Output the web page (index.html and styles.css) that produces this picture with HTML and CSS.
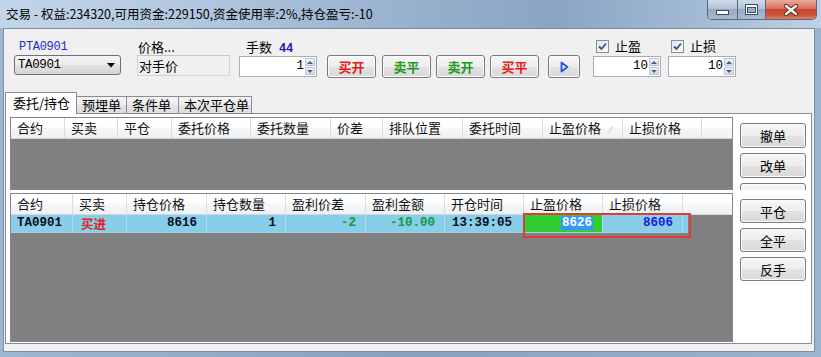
FILE: index.html
```html
<!DOCTYPE html>
<html lang="zh-CN">
<head>
<meta charset="utf-8">
<title>交易</title>
<link rel="stylesheet" href="styles.css">
</head>
<body>
<div class="win">
  <div class="titlebar">
    <span class="title">交易 - 权益:234320,可用资金:229150,资金使用率:2%,持仓盈亏:-10</span>
    <div class="caps">
      <div class="cap cap-min"><svg width="13" height="6" viewBox="0 0 13 6"><rect x="0.5" y="0.5" width="12" height="4" fill="#fff" stroke="#3a4a66"/></svg></div>
      <div class="cap cap-max"><svg width="13" height="11" viewBox="0 0 13 11"><rect x="0.5" y="0.5" width="12" height="10" fill="#fff" stroke="#3a4a66"/><rect x="2.5" y="3.5" width="8" height="5" fill="#9fb1c9" stroke="#3a4a66"/></svg></div>
      <div class="cap cap-close"><svg width="16" height="12" viewBox="0 0 16 12"><path d="M3 2 L13 10 M13 2 L3 10" stroke="#5b2218" stroke-width="4.4" stroke-linecap="round"/><path d="M3 2 L13 10 M13 2 L3 10" stroke="#fff" stroke-width="2.4" stroke-linecap="round"/></svg></div>
    </div>
  </div>

  <div class="client">
    <div class="controls">
      <div class="col col-code">
        <div class="lbl code-lbl">PTA0901</div>
        <div class="combo"><span class="combo-val">TA0901</span><svg class="combo-arrow" width="8" height="5" viewBox="0 0 8 5"><path d="M0 0 H8 L4 4.5 Z" fill="#000"/></svg></div>
      </div>
      <div class="col col-price">
        <div class="lbl price-lbl">价格...</div>
        <div class="pricebox">对手价</div>
      </div>
      <div class="col col-qty">
        <div class="lbl qty-lbl">手数 <b class="qty-max">44</b></div>
        <div class="spin spin-qty"><span class="spin-val">1</span><div class="spin-btns"><span class="sb sb-up"></span><span class="sb sb-dn"></span></div></div>
      </div>
      <button class="btn act red b1">买开</button>
      <button class="btn act green b2">卖平</button>
      <button class="btn act green b3">卖开</button>
      <button class="btn act red b4">买平</button>
      <button class="btn play"><svg width="9" height="12" viewBox="0 0 9 12"><path d="M1.5 1.5 L7.5 6 L1.5 10.5 Z" fill="none" stroke="#2458d0" stroke-width="1.8" stroke-linejoin="round"/></svg></button>
      <div class="col col-chk c1">
        <div class="chk"><span class="box"><svg width="11" height="11" viewBox="0 0 11 11"><path d="M2 5.5 L4.5 8 L9 2.5" fill="none" stroke="#3b4f91" stroke-width="1.8"/></svg></span>止盈</div>
        <div class="spin spin-sm"><span class="spin-val">10</span><div class="spin-btns"><span class="sb sb-up"></span><span class="sb sb-dn"></span></div></div>
      </div>
      <div class="col col-chk c2">
        <div class="chk"><span class="box"><svg width="11" height="11" viewBox="0 0 11 11"><path d="M2 5.5 L4.5 8 L9 2.5" fill="none" stroke="#3b4f91" stroke-width="1.8"/></svg></span>止损</div>
        <div class="spin spin-sm"><span class="spin-val">10</span><div class="spin-btns"><span class="sb sb-up"></span><span class="sb sb-dn"></span></div></div>
      </div>
    </div>

    <div class="tabs">
      <div class="tab tab-on">委托/持仓</div>
      <div class="tab t2">预埋单</div>
      <div class="tab t3">条件单</div>
      <div class="tab t4">本次平仓单</div>
    </div>

    <div class="page">
      <div class="pane pane-top">
        <div class="lv">
          <div class="lv-head cols-top">
            <div class="hc">合约</div>
            <div class="hc">买卖</div>
            <div class="hc">平仓</div>
            <div class="hc">委托价格</div>
            <div class="hc">委托数量</div>
            <div class="hc">价差</div>
            <div class="hc">排队位置</div>
            <div class="hc">委托时间</div>
            <div class="hc">止盈价格<span class="sort">⁄</span></div>
            <div class="hc">止损价格</div>
            <div class="hc hc-fill"></div>
          </div>
          <div class="lv-body"></div>
        </div>
        <div class="side side-top">
          <button class="btn sbtn h25">撤单</button>
          <button class="btn sbtn h25">改单</button>
          <button class="btn sbtn h25" aria-label="删单"></button>
        </div>
      </div>

      <div class="pane pane-bot">
        <div class="lv">
          <div class="lv-head cols-bot">
            <div class="hc">合约</div>
            <div class="hc">买卖</div>
            <div class="hc">持仓价格</div>
            <div class="hc">持仓数量</div>
            <div class="hc">盈利价差</div>
            <div class="hc">盈利金额</div>
            <div class="hc">开仓时间</div>
            <div class="hc">止盈价格</div>
            <div class="hc">止损价格</div>
            <div class="hc hc-fill"></div>
          </div>
          <div class="lv-row cols-bot">
            <div class="dc dc-code">TA0901</div>
            <div class="dc dc-side">买进</div>
            <div class="dc num">8616</div>
            <div class="dc num">1</div>
            <div class="dc num grn">-2</div>
            <div class="dc num grn">-10.00</div>
            <div class="dc dc-time">13:39:05</div>
            <div class="dc num dc-tp"><span class="sel">8626</span></div>
            <div class="dc num blu">8606</div>
            <div class="dc dc-fill"></div>
            <div class="hl"></div>
          </div>
          <div class="lv-body"></div>
        </div>
        <div class="side side-bot">
          <button class="btn sbtn">平仓</button>
          <button class="btn sbtn">全平</button>
          <button class="btn sbtn">反手</button>
        </div>
      </div>
    </div>
  </div>
</div>
</body>
</html>
```

FILE: styles.css
```css
* { box-sizing: border-box; }
html, body { margin: 0; padding: 0; }
body {
  width: 821px;
  height: 357px;
  overflow: hidden;
  background: linear-gradient(to right, #9fb6d0 0%, #86a1c0 50%, #9cb3ce 100%);
  font-family: "Noto Sans CJK SC", "Noto Sans", sans-serif;
  font-size: 13px;
  color: #000;
}
.win { width: 821px; height: 357px; display: flex; flex-direction: column; }

/* title bar */
.titlebar {
  height: 28px;
  flex: none;
  display: flex;
  align-items: flex-start;
  background: linear-gradient(to right, #c3d5ea 0%, #b1c6de 25%, #97b0cc 50%, #8aa5c3 68%, #a8bed7 88%, #bdd0e5 100%);
}
.title {
  padding-left: 6px;
  line-height: 28px;
  font-size: 12.5px;
  white-space: nowrap;
}
.caps {
  margin-left: auto;
  margin-right: 4px;
  display: flex;
  height: 20px;
  border: 1px solid #56677f;
  border-top: none;
  border-radius: 0 0 5px 5px;
  overflow: hidden;
}
.cap { height: 19px; display: flex; align-items: center; justify-content: center; }
.cap-min, .cap-max {
  background: linear-gradient(#cfdbea 0%, #b2c2d7 45%, #97aac4 50%, #a9bad1 100%);
  border-right: 1px solid #56677f;
}
.cap-min { width: 30px; }
.cap-min svg { margin-top: 6px; }
.cap-max { width: 28px; }
.cap-close {
  width: 50px;
  background: linear-gradient(#eaa898 0%, #d8735e 45%, #c5452d 50%, #cf553c 80%, #e08066 100%);
}

/* client area */
.client {
  margin: 0 6px 0 3px;
  height: 324px;
  flex: none;
  background: #f0f0f0;
  border: 1px solid #7d8ea5;
  display: flex;
  flex-direction: column;
}

.controls {
  height: 63px;
  flex: none;
  display: flex;
  align-items: flex-start;
  padding: 10px 0 0 10px;
}
.col { display: flex; flex-direction: column; }
.lbl { height: 16px; line-height: 16px; font-size: 13px; white-space: nowrap; }
.code-lbl {
  font-family: "Liberation Mono", monospace;
  font-size: 12px;
  color: #2b2bc4;
  padding-left: 5px;
  letter-spacing: -0.3px;
}
.price-lbl { padding-left: 1px; }
.qty-lbl { padding-left: 7px; }
.qty-max {
  font-family: "Liberation Mono", monospace;
  font-size: 12px;
  color: #1c1cb8;
  margin-left: 4px;
}

.col-code { width: 107px; margin-right: 16px; }
.combo {
  height: 20px;
  border: 1px solid #707070;
  border-radius: 3px;
  background: linear-gradient(#f4f4f4 0%, #ececec 50%, #e0e0e0 51%, #d6d6d6 100%);
  display: flex;
  align-items: center;
  padding: 0 5px 0 3px;
}
.combo-val { font-family: "Liberation Mono", monospace; font-size: 12.5px; flex: 1; letter-spacing: -0.4px; }

.col-price { width: 93px; margin-right: 9px; }
.pricebox {
  height: 21px;
  background: #f0f0f0;
  border: 1px solid #d2d2d2;
  border-top-color: #c4c4c4;
  padding-left: 1px;
  line-height: 19px;
  font-size: 13px;
}

.col-qty { width: 78px; margin-right: 10px; }
.spin {
  height: 21px;
  margin-top: 1px;
  border: 1px solid #abadb3;
  background: #fff;
  display: flex;
}
.spin-val {
  flex: 1;
  text-align: right;
  padding-right: 1px;
  font-family: "Liberation Mono", monospace;
  font-size: 12.5px;
  line-height: 19px;
}
.spin-btns { width: 11px; display: flex; flex-direction: column; padding: 1px 1px 1px 0; gap: 1px; }
.sb {
  flex: 1;
  background: linear-gradient(#f2f5fa, #d5dfec);
  border: 1px solid #b4c0d2;
  border-radius: 1px;
  display: flex;
  align-items: center;
  justify-content: center;
}
.sb-up::after {
  content: "";
  border-left: 3px solid transparent;
  border-right: 3px solid transparent;
  border-bottom: 3px solid #4c5d80;
}
.sb-dn::after {
  content: "";
  border-left: 3px solid transparent;
  border-right: 3px solid transparent;
  border-top: 3px solid #4c5d80;
}

/* buttons */
.btn {
  font-family: "Noto Sans CJK SC", "Noto Sans", sans-serif;
  font-size: 13px;
  color: #000;
  padding: 0;
  margin: 0;
  border: 1px solid #7a7a7a;
  border-radius: 3px;
  background: linear-gradient(#f6f6f6 0%, #ededed 50%, #e2e2e2 51%, #d9d9d9 100%);
  box-shadow: inset 0 0 0 1px #fbfbfb;
  display: flex;
  align-items: center;
  justify-content: center;
  line-height: 1;
}
.act { width: 49px; height: 23px; margin-top: 16px; font-weight: 700; }
.red { color: #e41c1c; }
.green { color: #1f9a1f; }
.b1 { margin-right: 6px; }
.b2 { margin-right: 5px; }
.b3 { margin-right: 5px; }
.b4 { margin-right: 9px; }
.play { width: 32px; height: 23px; margin-top: 16px; margin-right: 13px; }

.col-chk { width: 68px; margin-top: -1px; }
.c1 { margin-right: 7px; }
.chk {
  height: 16px;
  display: flex;
  align-items: center;
  gap: 6px;
  padding-left: 3px;
  font-size: 13px;
  line-height: 16px;
}
.box {
  width: 13px;
  height: 13px;
  border: 1px solid #8e8f8f;
  background: linear-gradient(135deg, #dfe3ea, #fbfbfc);
  display: flex;
  align-items: center;
  justify-content: center;
}
.spin-sm { margin-top: 2px; }

/* tabs */
.tabs {
  height: 21px;
  flex: none;
  display: flex;
  align-items: flex-end;
  padding-left: 1px;
  position: relative;
  z-index: 1;
}
.tab {
  height: 17px;
  border: 1px solid #898c95;
  border-bottom: none;
  background: linear-gradient(#f4f4f4 0%, #ececec 50%, #e3e3e3 51%, #dedede 100%);
  margin-left: -1px;
  padding-left: 5px;
  line-height: 16px;
  font-size: 13px;
  white-space: nowrap;
}
.tab-on {
  height: 22px;
  width: 72px;
  margin-left: 0;
  margin-bottom: -1px;
  background: #fff;
  padding-left: 7px;
  line-height: 20px;
}
.t2 { width: 51px; }
.t3 { width: 53px; }
.t4 { width: 74px; }

/* tab page */
.page {
  height: 231px;
  flex: none;
  margin: 0 2px 0 1px;
  border: 1px solid #898c95;
  background: #fff;
  padding: 3px 5px 1px 4px;
  display: flex;
  flex-direction: column;
  gap: 3px;
}
.pane { display: flex; flex: none; }
.pane-top { height: 73px; }
.pane-bot { height: 149px; }

.lv {
  width: 723px;
  border: 1px solid #828790;
  display: flex;
  flex-direction: column;
  background: #808080;
}
.lv-head {
  height: 21px;
  flex: none;
  display: grid;
  background: linear-gradient(#ffffff 0%, #ffffff 45%, #f6f7f8 50%, #eff0f2 100%);
  border-bottom: 1px solid #d5d5d5;
}
.cols-top { grid-template-columns: 54px 53px 54px 79px 80px 52px 80px 80px 80px 79px 1fr; }
.cols-bot { grid-template-columns: 62px 54px 80px 79px 80px 79px 79px 79px 80px 1fr; }
.hc {
  border-right: 1px solid #dcdcdc;
  padding-left: 6px;
  line-height: 20px;
  font-size: 13px;
  white-space: nowrap;
  overflow: hidden;
  color: #111;
}
.hc-fill { border-right: none; }
.sort { color: #b4b4b4; font-size: 9px; margin-left: 9px; }
.lv-body { flex: 1; background: #808080; }

.lv-row {
  height: 18px;
  flex: none;
  display: grid;
  position: relative;
  background: #808080;
}
.dc {
  background: #87ceeb;
  border-right: 1px solid #b2dcee;
  border-bottom: 1px solid #a9cfe0;
  font-family: "Liberation Mono", monospace;
  font-weight: 700;
  font-size: 12.5px;
  line-height: 17px;
  white-space: nowrap;
  overflow: hidden;
  color: #0c0c20;
}
.dc-code { padding-left: 6px; }
.dc-side {
  padding-left: 8px;
  font-family: "Noto Sans CJK SC", sans-serif;
  font-size: 12.5px;
  line-height: 17px;
  overflow: visible;
  color: #e02020;
}
.num { text-align: right; padding-right: 9px; }
.grn { color: #129a3c; }
.blu { color: #1c1cdc; }
.dc-time { padding-left: 7px; }
.dc-tp { background: #32cd32; }
.sel { background: #3399ff; color: #fff; padding: 0 1px; }
.dc-fill { background: linear-gradient(to right, #87ceeb 0, #87ceeb 5px, #808080 5px); border: none; }
.hl {
  position: absolute;
  left: 512px;
  top: -2px;
  width: 168px;
  height: 25px;
  border: 2px solid #e23a35;
  pointer-events: none;
}

.side {
  width: 66px;
  margin-left: 7px;
  display: flex;
  flex-direction: column;
  padding-top: 6px;
  gap: 5px;
  overflow: hidden;
}
.sbtn { width: 66px; height: 24px; flex: none; }
.h25 { height: 25px; }
```
